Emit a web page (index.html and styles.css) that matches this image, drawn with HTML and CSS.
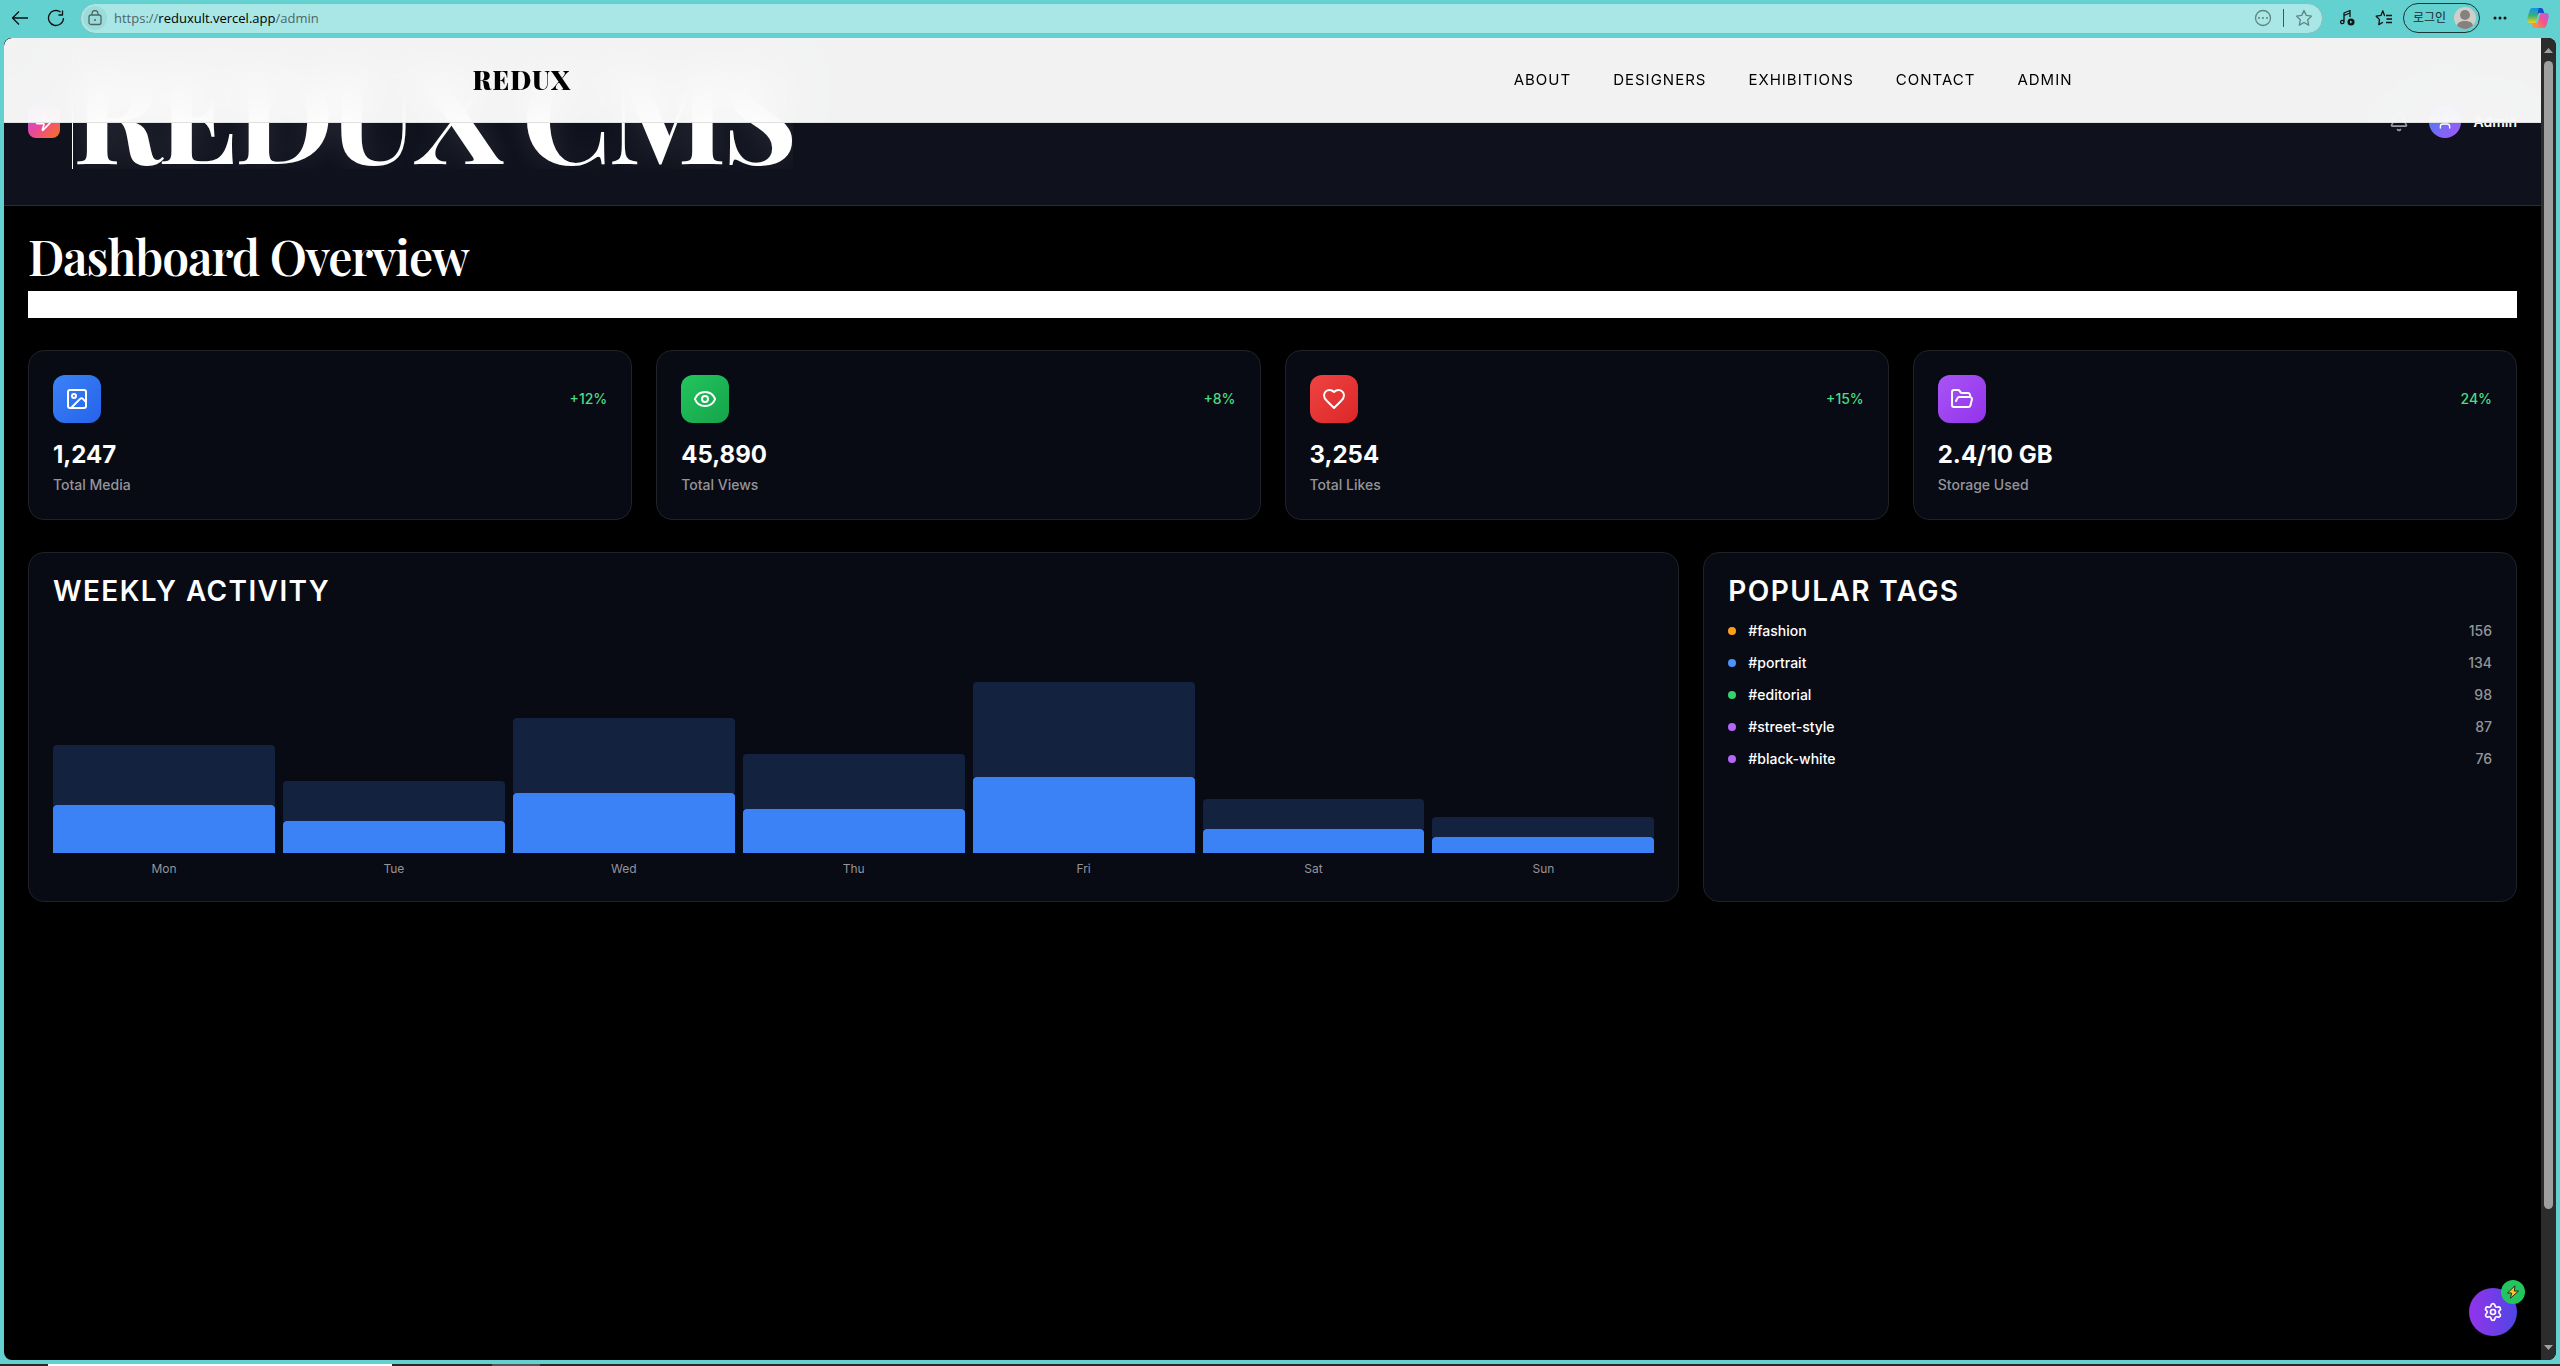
FILE: index.html
```html
<!DOCTYPE html>
<html lang="ko">
<head>
<meta charset="utf-8">
<title>REDUX CMS</title>
<link rel="stylesheet" href="styles.css">
</head>
<body>
<div class="toolbar">
  <button class="tool" aria-label="Back"><svg width="18" height="18" viewBox="0 0 18 18"><path d="M8 2.500L1.500 9 8 15.500M1.500 9H17"/></svg></button>
  <button class="tool" aria-label="Refresh"><svg width="18" height="18" viewBox="0 0 18 18"><path d="M13.500 3A7.500 7.500 0 1 0 16.500 9M11.500 6h4V1.500"/></svg></button>
  <div class="address">
    <span class="lock"><svg width="14" height="16" viewBox="0 0 14 16"><rect x="1" y="5" width="12" height="9.500" rx="2"/><path d="M4 5V3.500a3 3 0 0 1 6 0V5"/><circle class="solid" cx="7" cy="10" r="1"/></svg></span>
    <p class="url">https://<b>reduxult.vercel.app</b>/admin</p>
    <button class="tool faint" aria-label="More actions"><svg width="18" height="18" viewBox="0 0 18 18"><circle cx="9" cy="9" r="7.500"/><path class="dots" d="M5 9h.01M9 9h.01M13 9h.01"/></svg></button>
    <span class="divider"></span>
    <button class="tool faint" aria-label="Favorite"><svg width="18" height="18" viewBox="0 0 18 18"><path d="M9 1.500l2.300 4.900 5.300.7-3.900 3.700 1 5.300L9 13.500l-4.700 2.600 1-5.300L1.400 7.100l5.300-.7z"/></svg></button>
  </div>
  <div class="tools">
    <button class="tool" aria-label="Media"><svg width="18" height="18" viewBox="0 0 18 18"><path d="M5 12.500V4l6-2.500V8M5 6.500l6-2.500"/><circle cx="3.300" cy="13" r="1.700"/><circle class="solid" cx="12" cy="13" r="3.500"/><path class="cut" d="M11 11.500l2.500 1.500-2.500 1.500z"/></svg></button>
    <button class="tool" aria-label="Favorites list"><svg width="18" height="18" viewBox="0 0 18 18"><path d="M10 6.500h-.500L7.800 1.800 6 6.400l-4.800.8L4.500 10.600l-.7 5L8 13.300M11 6.500h6M11.500 10H17M11 13.500h6"/></svg></button>
    <button class="login">로그인<svg class="face" width="22" height="22" viewBox="0 0 22 22"><circle cx="11" cy="11" r="11" fill="#d1ceca"/><circle cx="11" cy="8" r="5" fill="#86817d"/><path d="M3 18.500C4 15 7 14 11 14s7 1 8 4.500A11 11 0 0 1 3 18.500z" fill="#86817d"/></svg></button>
    <button class="tool" aria-label="Settings and more"><svg width="18" height="18" viewBox="0 0 18 18"><path class="more" d="M4 9h.01M9 9h.01M14 9h.01"/></svg></button>
    <button class="tool copilot" aria-label="Copilot"><svg width="22" height="22" viewBox="0 0 22 22"><defs><linearGradient id="ca" x1="0" y1="0" x2="0" y2="1"><stop offset="0" stop-color="#1591ee"/><stop offset=".5" stop-color="#35b178"/><stop offset="1" stop-color="#f5d21b"/></linearGradient><linearGradient id="cb" x1="1" y1="0" x2="0" y2="1"><stop offset="0" stop-color="#b05cf0"/><stop offset=".5" stop-color="#f0558f"/><stop offset="1" stop-color="#ff8b42"/></linearGradient></defs><path fill="url(#ca)" d="M5.500 1H13L9 14.500c-.3 1-1 1.500-2 1.500H3C0 16 0 12.500.6 10.500L2.500 4C3 2 4 1 5.500 1z"/><path fill="#164fc9" d="M11.500 1H14c2 0 2.500 2 3.200 5H13c-1.500 0-2 .5-2.500 2z"/><path fill="url(#cb)" d="M16.500 21H9l4-13.500c.3-1 1-1.500 2-1.500h4c3 0 3 3.500 2.400 5.500L19.500 18c-.5 2-1.500 3-3 3z"/><path fill="#ff8b42" d="M10.500 21H8c-2 0-2.500-2-3.200-5H9c1.500 0 2-.5 2.500-2z"/></svg></button>
  </div>
</div>

<div class="window">
  <div class="page">
    <nav class="site-nav">
      <div class="nav-inner">
        <a class="brand" href="#">REDUX</a>
        <div class="links"><a href="#">ABOUT</a><a href="#">DESIGNERS</a><a href="#">EXHIBITIONS</a><a href="#">CONTACT</a><a href="#">ADMIN</a></div>
      </div>
    </nav>
    <header class="cms-header">
      <span class="cms-logo"><svg class="icon" width="20" height="20" viewBox="0 0 24 24"><path d="M4 14a1 1 0 0 1-.78-1.630l9.900-10.200a.5.5 0 0 1 .86.460l-1.920 6.020A1 1 0 0 0 13 10h7a1 1 0 0 1 .78 1.630l-9.900 10.200a.5.5 0 0 1-.86-.460l1.920-6.020A1 1 0 0 0 11 14z"/></svg></span>
      <h1>REDUX CMS</h1>
      <div class="account">
        <svg class="icon bell" width="20" height="20" viewBox="0 0 24 24"><path d="M10.268 21a2 2 0 0 0 3.464 0M3.262 15.326A1 1 0 0 0 4 17h16a1 1 0 0 0 .74-1.673C19.410 13.956 18 12.499 18 8A6 6 0 0 0 6 8c0 4.499-1.411 5.956-2.738 7.326"/></svg>
        <span class="avatar"><svg class="icon" width="16" height="16" viewBox="0 0 24 24"><path d="M19 21v-2a4 4 0 0 0-4-4H9a4 4 0 0 0-4 4v2"/><circle cx="12" cy="7" r="4"/></svg></span>
        <span class="user">Admin</span>
      </div>
    </header>
    <main>
      <h2>Dashboard Overview</h2>
      <div class="banner"></div>
      <section class="stats">
        <article class="card">
          <div class="stat-top"><span class="stat-icon blue"><svg class="icon" width="24" height="24" viewBox="0 0 24 24"><rect x="3" y="3" width="18" height="18" rx="2"/><circle cx="9" cy="9" r="2"/><path d="m21 15-3.086-3.086a2 2 0 0 0-2.828 0L6 21"/></svg></span><span class="change">+12%</span></div>
          <p class="value">1,247</p><p class="label">Total Media</p>
        </article>
        <article class="card">
          <div class="stat-top"><span class="stat-icon green"><svg class="icon" width="24" height="24" viewBox="0 0 24 24"><path d="M2.062 12.348a1 1 0 0 1 0-.696 10.750 10.750 0 0 1 19.876 0 1 1 0 0 1 0 .696 10.750 10.750 0 0 1-19.876 0"/><circle cx="12" cy="12" r="3"/></svg></span><span class="change">+8%</span></div>
          <p class="value">45,890</p><p class="label">Total Views</p>
        </article>
        <article class="card">
          <div class="stat-top"><span class="stat-icon red"><svg class="icon" width="24" height="24" viewBox="0 0 24 24"><path d="M19 14c1.490-1.460 3-3.210 3-5.500A5.500 5.500 0 0 0 16.500 3c-1.760 0-3 .5-4.500 2-1.500-1.500-2.740-2-4.500-2A5.500 5.500 0 0 0 2 8.500c0 2.300 1.500 4.050 3 5.500l7 7Z"/></svg></span><span class="change">+15%</span></div>
          <p class="value">3,254</p><p class="label">Total Likes</p>
        </article>
        <article class="card">
          <div class="stat-top"><span class="stat-icon purple"><svg class="icon" width="24" height="24" viewBox="0 0 24 24"><path d="m6 14 1.500-2.900A2 2 0 0 1 9.240 10H20a2 2 0 0 1 1.940 2.500l-1.540 6a2 2 0 0 1-1.950 1.500H4a2 2 0 0 1-2-2V5a2 2 0 0 1 2-2h3.900a2 2 0 0 1 1.690.9l.81 1.200a2 2 0 0 0 1.670.9H18a2 2 0 0 1 2 2v2"/></svg></span><span class="change">24%</span></div>
          <p class="value">2.4/10 GB</p><p class="label">Storage Used</p>
        </article>
      </section>
      <section class="panels">
        <article class="card activity">
          <h3>WEEKLY ACTIVITY</h3>
          <div class="chart">
            <div class="day"><i class="views" style="height:60px"></i><i class="uploads" style="height:48px"></i><span>Mon</span></div>
            <div class="day"><i class="views" style="height:40px"></i><i class="uploads" style="height:32px"></i><span>Tue</span></div>
            <div class="day"><i class="views" style="height:75px"></i><i class="uploads" style="height:60px"></i><span>Wed</span></div>
            <div class="day"><i class="views" style="height:55px"></i><i class="uploads" style="height:44px"></i><span>Thu</span></div>
            <div class="day"><i class="views" style="height:95px"></i><i class="uploads" style="height:76px"></i><span>Fri</span></div>
            <div class="day"><i class="views" style="height:30px"></i><i class="uploads" style="height:24px"></i><span>Sat</span></div>
            <div class="day"><i class="views" style="height:20px"></i><i class="uploads" style="height:16px"></i><span>Sun</span></div>
          </div>
        </article>
        <article class="card">
          <h3>POPULAR TAGS</h3>
          <ul class="tags">
            <li><i class="dot orange"></i>#fashion<span>156</span></li>
            <li><i class="dot sky"></i>#portrait<span>134</span></li>
            <li><i class="dot lime"></i>#editorial<span>98</span></li>
            <li><i class="dot violet"></i>#street-style<span>87</span></li>
            <li><i class="dot violet"></i>#black-white<span>76</span></li>
          </ul>
        </article>
      </section>
    </main>
    <button class="fab" aria-label="Settings">
      <svg class="icon" width="20" height="20" viewBox="0 0 24 24"><path d="M9.671 4.136a2.340 2.340 0 0 1 4.659 0 2.340 2.340 0 0 0 3.319 1.915 2.340 2.340 0 0 1 2.330 4.033 2.340 2.340 0 0 0 0 3.831 2.340 2.340 0 0 1-2.330 4.033 2.340 2.340 0 0 0-3.319 1.915 2.340 2.340 0 0 1-4.659 0 2.340 2.340 0 0 0-3.320-1.915 2.340 2.340 0 0 1-2.330-4.033 2.340 2.340 0 0 0 0-3.831A2.340 2.340 0 0 1 6.350 6.051a2.340 2.340 0 0 0 3.319-1.915"/><circle cx="12" cy="12" r="3"/></svg>
      <span class="fab-badge"><svg width="14" height="14" viewBox="0 0 14 14"><path d="M9 .8L1.500 8h4L4.500 13.200 12.500 6H8.300z" fill="#fcc31e" stroke="#2b2b20" stroke-width="1" stroke-linejoin="round"/></svg></span>
    </button>
  </div>
  <div class="scrollbar">
    <svg width="9" height="5" viewBox="0 0 9 5"><path d="M0 5L4.500 0 9 5z"/></svg>
    <span class="thumb"></span>
    <svg width="9" height="5" viewBox="0 0 9 5"><path d="M0 0h9L4.500 5z"/></svg>
  </div>
</div>
<div class="taskbar"><span class="task open"></span><span class="task"></span></div>
</body>
</html>
```
FILE: styles.css
```css
* { box-sizing: border-box; margin: 0; padding: 0; }
body {
  height: 100vh; display: flex; flex-direction: column; overflow: hidden;
  background: #62d1d0; color: #fff; font-family: Inter, "Noto Sans CJK KR", sans-serif; font-size: 14px;
}
button { border: 0; background: none; font: inherit; color: inherit; }
a { color: inherit; text-decoration: none; }
svg { display: block; flex: none; }

/* Browser toolbar */
.toolbar { height: 38px; flex: none; display: flex; align-items: center; padding: 0 4px 2px 2px; }
.tool { width: 36px; height: 30px; display: flex; align-items: center; justify-content: center; color: #111; flex: none; }
.tool svg, .lock svg { fill: none; stroke: currentColor; stroke-width: 1.3; stroke-linejoin: round; }
.tool .solid, .lock .solid { fill: currentColor; stroke: none; }
.tool .cut { fill: #62d1d0; stroke: none; }
.tool .dots { stroke-width: 2; stroke-linecap: round; }
.tool .more { stroke-width: 3; stroke-linecap: round; }
.tool.copilot { margin-left: 2px; }
.tool.copilot svg { stroke: none; }
.tool.faint { color: #5f8583; width: 32px; }
.address {
  flex: 1; height: 31px; margin-left: 6px; padding: 0 2px; display: flex; align-items: center;
  background: #a8e7e5; border: 1px solid #82bfbe; border-radius: 16px;
}
.lock { width: 24px; height: 24px; border-radius: 50%; background: #9bdbd9; color: #4c6665; display: grid; place-items: center; }
.url { flex: 1; margin-left: 7px; color: #4c6665; font: 13px/20px "Open Sans", "Noto Sans", sans-serif; }
.url b { font-weight: 400; color: #000; }
.divider { width: 1px; height: 18px; margin: 0 4px; background: #365b5a; }
.tools { display: flex; align-items: center; padding-left: 7px; }
.login {
  height: 30px; width: 77px; margin: 0 2px 0 1px; padding: 0 3px 0 9px; display: flex; align-items: center; justify-content: space-between;
  border: 1px solid #1b3434; border-radius: 15px; color: #1b2a2a; font-size: 12px; line-height: 16px; white-space: nowrap;
}

/* Window */
.window { flex: 1; min-height: 0; margin: 0 4px; display: flex; border-radius: 8px; overflow: hidden; background: #000; }
.page { flex: 1; min-width: 0; position: relative; }
.scrollbar { width: 15px; flex: none; background: #2c2c2c; display: flex; flex-direction: column; align-items: center; padding: 10px 0; fill: #a0a0a0; }
.thumb { width: 9px; margin: 8px 0 auto; flex: 0 1 88.2%; border-radius: 5px; background: #9f9f9f; }
.taskbar { height: 2px; flex: none; margin-top: 4px; padding-left: 48px; background: #2b2724; display: flex; gap: 100px; }
.task { width: 48px; background: #555; }
.task.open { width: 344px; background: #fff; }

/* Site navigation */
.site-nav {
  position: absolute; inset: 0 0 auto; z-index: 2; height: 85px; display: flex; justify-content: center;
  background: rgba(255, 255, 255, .95); border-bottom: 1px solid #e0e0e0; backdrop-filter: blur(20px); color: #000;
}
.nav-inner { width: 1600px; max-width: 100%; display: flex; align-items: center; justify-content: space-between; }
.brand { font: 900 26px/34px "Playfair Display", "Liberation Serif", serif; letter-spacing: 1px; }
.links { display: flex; gap: 42px; font-size: 15px; line-height: 20px; letter-spacing: 1px; }

/* CMS header */
.cms-header {
  height: 168px; padding: 0 24px; display: flex; align-items: center; gap: 12px;
  background: #0f121d; border-bottom: 1px solid #2a2d37;
}
.cms-logo, .avatar { width: 32px; height: 32px; display: grid; place-items: center; }
.cms-logo { border-radius: 8px; background: linear-gradient(135deg, #a855f7, #ec4899 50%, #f97316); }
.avatar { border-radius: 50%; background: linear-gradient(135deg, #3b82f6, #a855f7); }
.icon { fill: none; stroke: #fff; stroke-width: 2; stroke-linecap: round; stroke-linejoin: round; }
h1, h2 { font-family: "Playfair Display", "Liberation Serif", serif; white-space: nowrap; }
h1 {
  margin-bottom: 21px; font-size: 128px; line-height: 115px; letter-spacing: -4px; overflow: hidden;
  border-left: 1px solid #fff; text-shadow: 0 0 30px rgba(255, 255, 255, .12);
}
.account { margin-left: auto; display: flex; align-items: center; font-weight: 600; }
.bell { stroke: #9a9ca3; margin-right: 20px; }
.avatar { margin-right: 12px; }

/* Dashboard */
main { padding: 24px; }
h2 { font-size: 48px; line-height: 53px; font-weight: 600; letter-spacing: -1px; }
.banner { height: 27px; margin: 8px 0 32px; background: #fff; }
.stats { display: grid; grid-template-columns: repeat(4, 1fr); gap: 24px; }
.panels { display: grid; grid-template-columns: repeat(3, 1fr); gap: 24px; margin-top: 32px; }
.activity { grid-column: span 2; }
.card { padding: 24px; border: 1px solid #202228; border-radius: 16px; background: #080b14; }
.stat-top { display: flex; align-items: center; justify-content: space-between; margin-bottom: 16px; }
.stat-icon { width: 48px; height: 48px; border-radius: 12px; display: grid; place-items: center; }
.blue { background: linear-gradient(135deg, #3b82f6, #2563eb); }
.green { background: linear-gradient(135deg, #22c55e, #16a34a); }
.red { background: linear-gradient(135deg, #ef4444, #dc2626); }
.purple { background: linear-gradient(135deg, #a855f7, #9333ea); }
.change { color: #4ade80; font-weight: 500; line-height: 20px; }
.value { font-size: 24px; line-height: 32px; font-weight: 700; }
.label { margin-top: 4px; line-height: 20px; font-weight: 500; color: #94959a; }
h3 { font-size: 28px; line-height: 28px; font-weight: 600; letter-spacing: .05em; margin-bottom: 16px; }
.chart { height: 256px; display: flex; gap: 8px; }
.day { flex: 1; display: flex; flex-direction: column; justify-content: flex-end; }
.views, .uploads { border-radius: 4px 4px 0 0; }
.views { background: #13233f; }
.uploads { background: #3b82f6; }
.day span { margin-top: 8px; text-align: center; font-size: 12px; line-height: 16px; color: #94959a; }
.tags { list-style: none; display: grid; gap: 12px; font-weight: 500; }
.tags li { display: flex; align-items: center; gap: 12px; line-height: 20px; }
.tags span { margin-left: auto; color: #94959a; }
.dot { width: 8px; height: 8px; border-radius: 50%; }
.orange { background: #fb9f1b; }
.sky { background: #4b93fa; }
.lime { background: #34d36c; }
.violet { background: #b566fa; }

/* Floating action */
.fab {
  position: absolute; right: 24px; bottom: 24px; width: 48px; height: 48px; border-radius: 50%;
  display: grid; place-items: center; background: linear-gradient(90deg, #9333ea, #4f46e5);
}
.fab-badge { position: absolute; top: -8px; right: -8px; width: 24px; height: 24px; border-radius: 50%; background: #22c55e; display: grid; place-items: center; }
```
